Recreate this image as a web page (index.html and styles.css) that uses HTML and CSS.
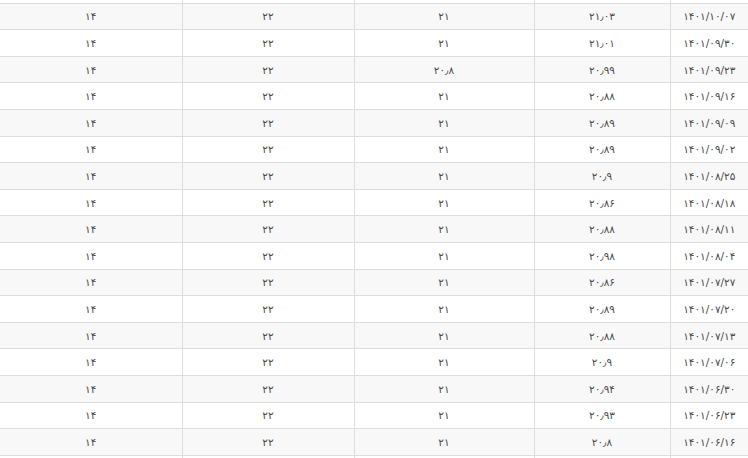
FILE: index.html
```html
<!DOCTYPE html>
<html lang="fa" dir="rtl">
<head>
<meta charset="utf-8">
<link rel="stylesheet" href="styles.css">
</head>
<body>
<table class="grid">
<colgroup><col class="c-date"><col class="c-price"><col class="c-a"><col class="c-b"><col class="c-c"></colgroup>
<tbody>
<tr class="row"><td></td><td></td><td></td><td></td><td></td></tr>
<tr class="row"><td>۱۴۰۱/۱۰/۰۷</td><td>۲۱٫۰۳</td><td>۲۱</td><td>۲۲</td><td>۱۴</td></tr>
<tr class="row"><td>۱۴۰۱/۰۹/۳۰</td><td>۲۱٫۰۱</td><td>۲۱</td><td>۲۲</td><td>۱۴</td></tr>
<tr class="row"><td>۱۴۰۱/۰۹/۲۳</td><td>۲۰٫۹۹</td><td>۲۰٫۸</td><td>۲۲</td><td>۱۴</td></tr>
<tr class="row"><td>۱۴۰۱/۰۹/۱۶</td><td>۲۰٫۸۸</td><td>۲۱</td><td>۲۲</td><td>۱۴</td></tr>
<tr class="row"><td>۱۴۰۱/۰۹/۰۹</td><td>۲۰٫۸۹</td><td>۲۱</td><td>۲۲</td><td>۱۴</td></tr>
<tr class="row"><td>۱۴۰۱/۰۹/۰۲</td><td>۲۰٫۸۹</td><td>۲۱</td><td>۲۲</td><td>۱۴</td></tr>
<tr class="row"><td>۱۴۰۱/۰۸/۲۵</td><td>۲۰٫۹</td><td>۲۱</td><td>۲۲</td><td>۱۴</td></tr>
<tr class="row"><td>۱۴۰۱/۰۸/۱۸</td><td>۲۰٫۸۶</td><td>۲۱</td><td>۲۲</td><td>۱۴</td></tr>
<tr class="row"><td>۱۴۰۱/۰۸/۱۱</td><td>۲۰٫۸۸</td><td>۲۱</td><td>۲۲</td><td>۱۴</td></tr>
<tr class="row"><td>۱۴۰۱/۰۸/۰۴</td><td>۲۰٫۹۸</td><td>۲۱</td><td>۲۲</td><td>۱۴</td></tr>
<tr class="row"><td>۱۴۰۱/۰۷/۲۷</td><td>۲۰٫۸۶</td><td>۲۱</td><td>۲۲</td><td>۱۴</td></tr>
<tr class="row"><td>۱۴۰۱/۰۷/۲۰</td><td>۲۰٫۸۹</td><td>۲۱</td><td>۲۲</td><td>۱۴</td></tr>
<tr class="row"><td>۱۴۰۱/۰۷/۱۳</td><td>۲۰٫۸۸</td><td>۲۱</td><td>۲۲</td><td>۱۴</td></tr>
<tr class="row"><td>۱۴۰۱/۰۷/۰۶</td><td>۲۰٫۹</td><td>۲۱</td><td>۲۲</td><td>۱۴</td></tr>
<tr class="row"><td>۱۴۰۱/۰۶/۳۰</td><td>۲۰٫۹۴</td><td>۲۱</td><td>۲۲</td><td>۱۴</td></tr>
<tr class="row"><td>۱۴۰۱/۰۶/۲۳</td><td>۲۰٫۹۳</td><td>۲۱</td><td>۲۲</td><td>۱۴</td></tr>
<tr class="row"><td>۱۴۰۱/۰۶/۱۶</td><td>۲۰٫۸</td><td>۲۱</td><td>۲۲</td><td>۱۴</td></tr>
<tr class="row"><td></td><td></td><td></td><td></td><td></td></tr>
</tbody>
</table>
</body>
</html>
```
FILE: styles.css
```css
html, body {
  margin: 0;
  padding: 0;
  background: #ffffff;
  overflow: hidden;
}
.grid {
  width: 748px;
  border-collapse: collapse;
  table-layout: fixed;
  margin-top: -24px;
  font-family: "DejaVu Sans", sans-serif;
  font-size: 10.5px;
  color: #4a4a4a;
}
.c-date { width: 78px; }
.c-price { width: 136px; }
.c-a { width: 180px; }
.c-b { width: 172px; }
.c-c { width: 182px; }
.row td {
  height: 25.6px;
  padding: 0;
  text-align: center;
  vertical-align: middle;
  border: 1px solid #dddddd;
  unicode-bidi: plaintext;
}
.row:nth-child(even) td {
  background: #f8f8f8;
}
.row td:first-child {
  border-right: none;
}
.row td:last-child {
  border-left: none;
}
```
